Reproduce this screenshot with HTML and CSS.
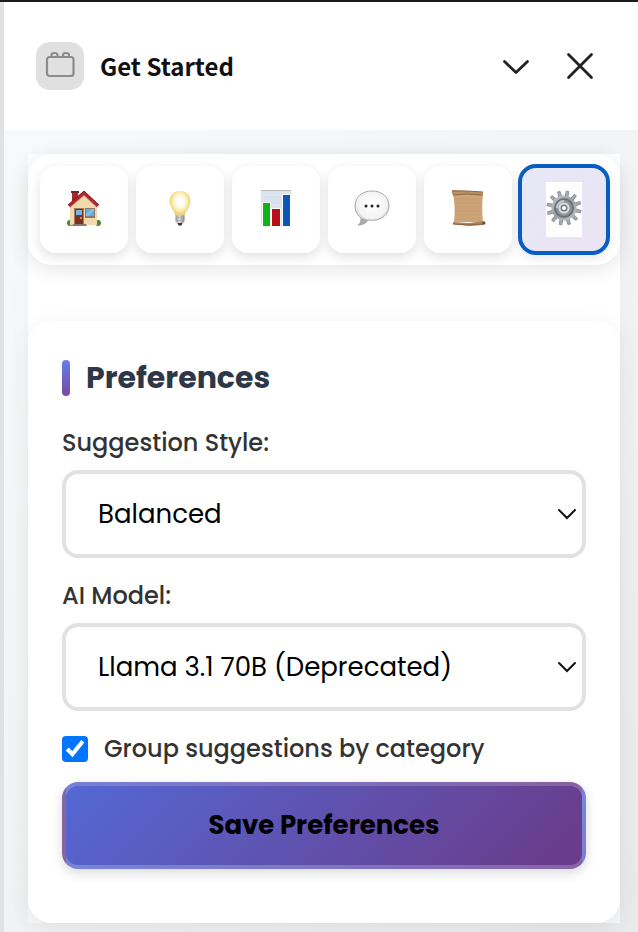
FILE: index.html
```html
<!DOCTYPE html>
<html lang="en">
<head>
  <meta charset="utf-8">
  <meta name="viewport" content="width=device-width, initial-scale=1">
  <title>Get Started</title>
  <link rel="stylesheet" href="styles.css">
</head>
<body>
<div class="panel">
  <header class="panel-header">
    <span class="panel-logo">
      <svg width="32" height="32" viewBox="0 0 32 32" fill="none" stroke="#8c8c8c" stroke-width="2.200">
        <rect x="3" y="7" width="26.500" height="19" rx="2.500"/>
        <path d="M7.500 7V5.500q0-2.500 2.500-2.500h1q2.500 0 2.500 2.500V7M19 7V5.500q0-2.500 2.500-2.500h1q2.500 0 2.500 2.500V7"/>
      </svg>
    </span>
    <h1 class="panel-title">Get Started</h1>
    <button class="icon-button" type="button" aria-label="Collapse">
      <svg width="32" height="32" viewBox="0 0 32 32" fill="none" stroke="#222" stroke-width="2.800" stroke-linecap="round" stroke-linejoin="round">
        <path d="M4.500 11.500L16 22.500L27.500 11.500"/>
      </svg>
    </button>
    <button class="icon-button" type="button" aria-label="Close">
      <svg width="32" height="32" viewBox="0 0 32 32" fill="none" stroke="#222" stroke-width="2.800" stroke-linecap="round">
        <path d="M4.500 4.500L27.500 27.500M27.500 4.500L4.500 27.500"/>
      </svg>
    </button>
  </header>

  <main class="panel-body">
    <div class="container">
      <nav class="tabs">
        <button class="tab" type="button" aria-label="Home">
          <span class="tab-glyph">
            <svg width="36" height="36" viewBox="0 0 36 36">
              <ellipse cx="4" cy="33" rx="3" ry="3" fill="#4d8a35"/>
              <ellipse cx="32" cy="33" rx="3" ry="3" fill="#4d8a35"/>
              <path d="M6 1h6v10H6z" fill="#a52a30"/>
              <path d="M5 1h8v2H5z" fill="#79202a"/>
              <path d="M4 15L18 3l13 12v20H4z" fill="#efd9ad"/>
              <path d="M4 18L18 6l13 12v-3L18 3 4 15z" fill="#c9a878"/>
              <path d="M2 15L18 1l15 14-2 2L18 5 4 17z" fill="#b3262e"/>
              <path d="M2 15L18 1l15 14" fill="none" stroke="#7a1c26"/>
              <path d="M8 18h10v17H8z" fill="#a47c55"/>
              <path d="M9 19h8v15H9z" fill="#753322"/>
              <path d="M10 20h6v5h-6z" fill="#77b5e5"/>
              <circle cx="15" cy="28" r="1" fill="#e4ae55"/>
              <path d="M19 18h10v10H19z" fill="#8c7866"/>
              <path d="M20 19h8v7h-8z" fill="#61aee2"/>
              <path d="M20 24l6-5h2v2l-6 5h-2z" fill="#82bfe8"/>
              <path d="M7 34h13l1 2H6z" fill="#8b7772"/>
            </svg>
          </span>
        </button>
        <button class="tab" type="button" aria-label="Suggestions">
          <span class="tab-glyph">
            <svg width="36" height="36" viewBox="0 0 36 36">
              <defs>
                <radialGradient id="bulb" cx=".5" cy=".42">
                  <stop offset="0" stop-color="#fff"/>
                  <stop offset=".45" stop-color="#fffbea"/>
                  <stop offset=".8" stop-color="#f9e795"/>
                  <stop offset="1" stop-color="#e5cf80"/>
                </radialGradient>
                <linearGradient id="socket">
                  <stop offset="0" stop-color="#8b8b8b"/>
                  <stop offset=".45" stop-color="#e5e5e5"/>
                  <stop offset="1" stop-color="#777"/>
                </linearGradient>
              </defs>
              <path d="M18 1C11 1 7.500 6 7.500 11.500c0 6 4.500 8 6 14.500h9c1.500-6.500 6-8.500 6-14.500C28.500 6 25 1 18 1z" fill="url(#bulb)"/>
              <path d="M13.500 25.500h9V31q-1 2-3 2.500h-3q-2-.5-3-2.500z" fill="url(#socket)"/>
              <path d="M14 28l8-1M14 31l8-1" stroke="#aaa"/>
              <path d="M15.500 33h5l-1 2.500h-3z" fill="#333"/>
            </svg>
          </span>
        </button>
        <button class="tab" type="button" aria-label="Statistics">
          <span class="tab-glyph">
            <svg width="36" height="36" viewBox="0 0 36 36">
              <path d="M3 0h30v36H3z" fill="#dce4ee"/>
              <path d="M3 .5h30" stroke="#b4b8bd"/>
              <path d="M3 7h30M3 13h30M3 19h30M3 25h30M3 31h30" stroke="#d2dce8"/>
              <path d="M4 12h9v24H4z" fill="#fff"/>
              <path d="M13 18h10v18H13z" fill="#fff"/>
              <path d="M24 4h9v32h-9z" fill="#fff"/>
              <path d="M5 13h7v23H5z" fill="#0eb31a"/>
              <path d="M14 19h8v17h-8z" fill="#bb0f17"/>
              <path d="M25 5h7v31h-7z" fill="#0b57b7"/>
            </svg>
          </span>
        </button>
        <button class="tab" type="button" aria-label="Chat">
          <span class="tab-glyph">
            <svg width="36" height="36" viewBox="0 0 36 36">
              <defs>
                <radialGradient id="bubble" cx=".5" cy=".38" r=".58">
                  <stop offset="0" stop-color="#fff"/>
                  <stop offset=".75" stop-color="#f3f3f3"/>
                  <stop offset="1" stop-color="#bbb"/>
                </radialGradient>
              </defs>
              <path d="M18 1C8 1 1 7 1 16c0 5 2 9 6 12 0 3 0 5-3 7 5 0 8-2 10-5 12 2 21-5 21-14S28 1 18 1z" fill="url(#bubble)" stroke="#aaa"/>
              <path d="M7 28c0 3 0 5-3 7 5 0 8-2 10-5z" fill="#aaa"/>
              <circle cx="12" cy="16" r="1.500" fill="#222"/>
              <circle cx="18" cy="16" r="1.500" fill="#222"/>
              <circle cx="24" cy="16" r="1.500" fill="#222"/>
            </svg>
          </span>
        </button>
        <button class="tab" type="button" aria-label="History">
          <span class="tab-glyph">
            <svg width="36" height="36" viewBox="0 0 36 36">
              <path d="M3 4h30c-1 9-1 19 0 28H4C5 23 5 13 3 4z" fill="#cda477"/>
              <path d="M5 9h26M5 13h26M5 17h26M5 21h26M5 25h26M5 29h26" stroke="#c59d70"/>
              <path d="M2 0l15 1 16 1v4L17 4 3 5Q1 3 2 0z" fill="#bd9063"/>
              <path d="M2 1l15 0 16 1M3 5l14-1 15 1" fill="none" stroke="#8a6846"/>
              <path d="M3 32l16 1 15-2q2 3-1 4l-14 1-16-2z" fill="#b28356"/>
              <path d="M3 34l16 1 14-1" fill="none" stroke="#8a6440"/>
              <circle cx="34" cy="33" r="1.500" fill="#674831"/>
            </svg>
          </span>
        </button>
        <button class="tab tab-active" type="button" aria-label="Preferences" aria-current="page">
          <span class="tab-glyph">
            <svg width="36" height="36" viewBox="0 0 36 36">
              <defs>
                <linearGradient id="gear" x1="0" y1="0" x2="1" y2="1">
                  <stop offset="0" stop-color="#c5c9cc"/>
                  <stop offset=".5" stop-color="#9a9fa4"/>
                  <stop offset="1" stop-color="#c3c7ca"/>
                </linearGradient>
                <g id="teeth">
                  <path d="M16.500 7l.3-6h2.400l.3 6zM16.500 29l.3 6h2.400l.3-6z"/>
                </g>
              </defs>
              <g fill="#a8adb1" stroke="#8f959a" transform="rotate(12 18 18)">
                <use href="#teeth"/>
                <use href="#teeth" transform="rotate(30 18 18)"/>
                <use href="#teeth" transform="rotate(60 18 18)"/>
                <use href="#teeth" transform="rotate(90 18 18)"/>
                <use href="#teeth" transform="rotate(120 18 18)"/>
                <use href="#teeth" transform="rotate(150 18 18)"/>
              </g>
              <circle cx="18" cy="18" r="12.500" fill="url(#gear)"/>
              <circle cx="18" cy="18" r="9" fill="#90969b" stroke="#6b7176" stroke-width="2"/>
              <path d="M11 18a7 7 0 0 1 7-7" fill="none" stroke="#c6cacd" stroke-width="2"/>
              <circle cx="18" cy="18" r="4.500" fill="#73797e" stroke="#dde0e2" stroke-width="2"/>
              <circle cx="18" cy="18" r="2" fill="#fff"/>
            </svg>
          </span>
        </button>
      </nav>

      <form class="card">
        <h2 class="card-title">Preferences</h2>

        <label class="label" for="style">Suggestion Style:</label>
        <div class="select-wrap">
          <select class="select" id="style">
            <option>Balanced</option>
          </select>
          <svg class="select-arrow" width="20" height="12" viewBox="0 0 20 12" fill="none" stroke="#111" stroke-width="2" stroke-linecap="round">
            <path d="M2 2l8 8 8-8"/>
          </svg>
        </div>

        <label class="label" for="model">AI Model:</label>
        <div class="select-wrap">
          <select class="select" id="model">
            <option>Llama 3.1 70B (Deprecated)</option>
          </select>
          <svg class="select-arrow" width="20" height="12" viewBox="0 0 20 12" fill="none" stroke="#111" stroke-width="2" stroke-linecap="round">
            <path d="M2 2l8 8 8-8"/>
          </svg>
        </div>

        <div class="check-row">
          <input class="check" type="checkbox" id="group" checked>
          <label class="check-label" for="group">Group suggestions by category</label>
        </div>

        <button class="save" type="button">Save Preferences</button>
      </form>
    </div>
  </main>
</div>
</body>
</html>
```
FILE: styles.css
```css
* {
  box-sizing: border-box;
}

body {
  margin: 0;
  font-family: Poppins, Inter, sans-serif;
  color: #333;
}

button,
select {
  font-family: inherit;
}

svg {
  display: block;
}

.panel {
  display: flex;
  flex-direction: column;
  min-height: 100vh;
  border-top: 2px solid #1b1a1c;
}

/* header */
.panel-header {
  display: flex;
  align-items: center;
  gap: 16px;
  height: 128px;
  padding: 0 42px 0 32px;
  border-left: 4px solid #e1e1e1;
  background: #fff;
}

.panel-logo {
  padding: 8px;
  border-radius: 14px;
  background: #e0e0e0;
}

.panel-title {
  flex: 1;
  margin: 0;
  font-family: "Adobe Clean", "Noto Sans CJK SC", sans-serif;
  font-size: 24px;
  font-weight: 700;
  line-height: 32px;
  color: #111;
}

.icon-button {
  padding: 0;
  border: 0;
  background: none;
}

.icon-button + .icon-button {
  margin-left: 16px;
}

/* body */
.panel-body {
  flex: 1;
  padding: 24px 18px 9px 24px;
  border-left: 4px solid #e1e1e1;
  background: linear-gradient(135deg, #f8f9fb, #f2f3f5 50%, #e9eaec);
}

.container {
  background: linear-gradient(#fff 50%, #f6f6f7);
  box-shadow: 0 8px 32px rgba(0, 0, 0, 0.02);
}

.tabs {
  display: grid;
  grid-template-columns: repeat(6, 1fr);
  gap: 8px;
  margin-bottom: 56px;
  padding: 12px;
  border-radius: 24px;
  background: #fff;
  box-shadow: 0 4px 20px rgba(0, 0, 0, 0.1);
}

.tab {
  display: flex;
  align-items: center;
  justify-content: center;
  height: 87px;
  padding: 0;
  border: 0;
  border-radius: 16px;
  background: #fff;
  box-shadow: 0 4px 12px rgba(0, 0, 0, 0.12);
}

.tab-active {
  outline: 4px solid #085dc2;
  outline-offset: -2px;
  background: linear-gradient(135deg, #e7e8f7, #ebe4f2);
}

.tab-glyph {
  padding: 8px 0 11px;
  background: #fff;
}

.card {
  padding: 34px 34px 54px;
  border-radius: 24px;
  background: #fff;
  box-shadow: 0 4px 24px rgba(0, 0, 0, 0.06);
}

.card-title {
  display: flex;
  align-items: center;
  gap: 16px;
  margin: 0 0 24px;
  font-size: 30px;
  font-weight: 700;
  line-height: 46px;
  color: #2d3748;
}

.card-title::before {
  content: "";
  width: 8px;
  height: 36px;
  border-radius: 4px;
  background: linear-gradient(#667eea, #764ba2);
}

.label {
  display: block;
  margin-bottom: 10px;
  font-size: 24px;
  font-weight: 500;
  line-height: 35px;
}

.select-wrap {
  display: grid;
  align-items: center;
  margin-bottom: 20px;
}

.select {
  grid-area: 1 / 1;
  width: 100%;
  height: 88px;
  padding: 0 32px;
  border: 4px solid #e2e2e2;
  border-radius: 16px;
  appearance: none;
  background: #fff;
  font-size: 26px;
  color: #000;
}

.select-arrow {
  grid-area: 1 / 1;
  justify-self: end;
  margin-right: 9px;
  pointer-events: none;
}

.check-row {
  display: flex;
  align-items: center;
  gap: 16px;
  margin-bottom: 15px;
}

/* zoom keeps the native corner radius in proportion */
.check {
  width: 13px;
  height: 13px;
  margin: 0;
  zoom: 2;
}

.check-label {
  font-size: 24px;
  font-weight: 500;
  line-height: 36px;
}

.save {
  width: 100%;
  height: 87px;
  border: 4px solid rgba(255, 255, 255, 0.2);
  border-radius: 16px;
  background: linear-gradient(135deg, #5468d4, #6b3a87);
  box-shadow: 0 4px 12px rgba(0, 0, 0, 0.15);
  font-size: 26px;
  font-weight: 700;
  color: #000;
}
```
